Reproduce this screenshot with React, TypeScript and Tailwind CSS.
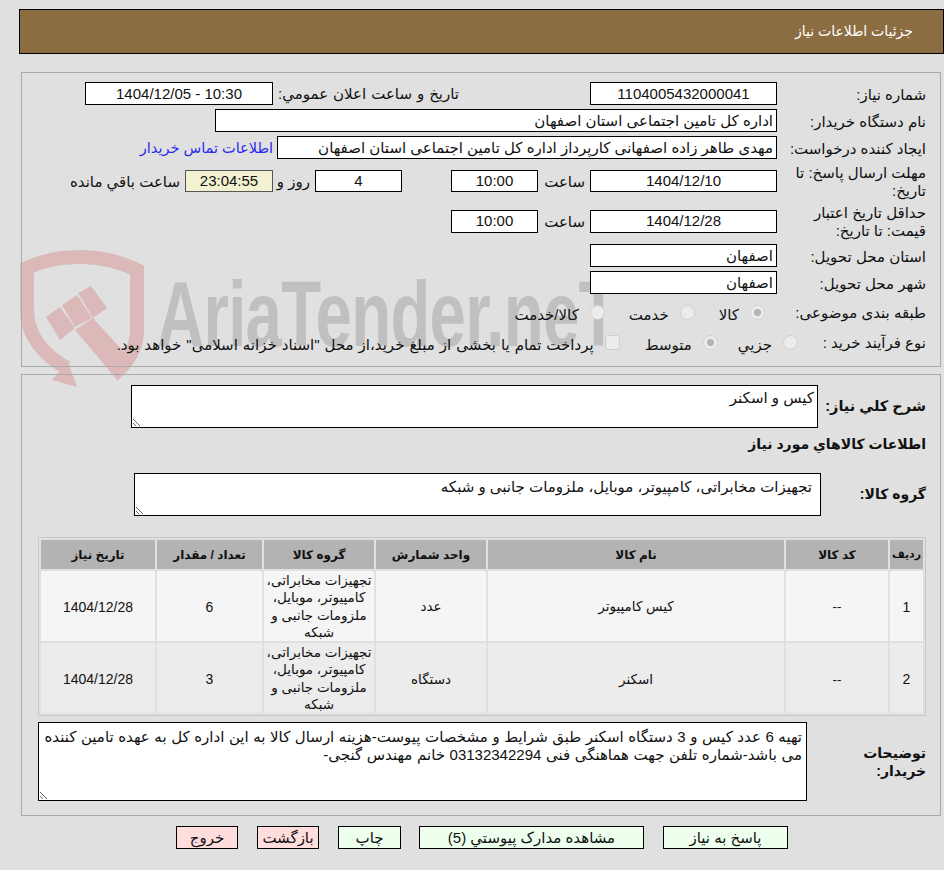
import React from "react";

const font = "font-['Liberation_Sans','DejaVu_Sans',sans-serif]";

function Box({ className = "", children }: { className?: string; children?: React.ReactNode }) {
  return (
    <div className={`flex items-center border border-black bg-white pt-[1px] text-[15px] text-[#111] ${className}`}>
      {children}
    </div>
  );
}

function Row({ label, className = "", children }: { label: React.ReactNode; className?: string; children: React.ReactNode }) {
  return (
    <div className={`flex items-center ${className}`}>
      <div className="relative top-[1px] w-[149px] shrink-0 text-[15px] leading-[18px]">{label}</div>
      {children}
    </div>
  );
}

const radioCls =
  "m-0 h-[15px] w-[15px] shrink-0 appearance-none rounded-full border border-[#cfcfcf] bg-[#ececec] checked:bg-[radial-gradient(circle,#b5b5b5_0,#b5b5b5_36%,#ececec_44%)]";

function Radio({ checked, label, className = "" }: { checked?: boolean; label: string; className?: string }) {
  return (
    <label className={`flex items-center gap-[11px] ${className}`}>
      <input type="radio" disabled defaultChecked={checked} className={radioCls} />
      <span className="relative top-[3px] whitespace-nowrap">{label}</span>
    </label>
  );
}

const groupText = "تجهیزات مخابراتی، کامپیوتر، موبایل، ملزومات جانبی و شبکه";

const items = [
  { id: 1, code: "--", name: "کیس کامپیوتر", unit: "عدد", count: 6, date: "1404/12/28", bg: "bg-[#f5f5f5]" },
  { id: 2, code: "--", name: "اسکنر", unit: "دستگاه", count: 3, date: "1404/12/28", bg: "bg-[#ececec]" },
];

function Watermark() {
  return (
    <div className="pointer-events-none absolute left-[15px] top-[240px] flex items-start" dir="ltr">
      <svg width="140" height="150" viewBox="0 0 140 150" fill="none" className="shrink-0">
        <path
          d="M52 128 C28 115 12 95 12 70 V28 C45 12 90 14 122 30 V90 C122 110 110 125 98 135"
          stroke="#dbb9b9"
          strokeWidth="14"
        />
        <path d="M37 140 L62 147 L53 122 Z" fill="#dbb9b9" />
        <path d="M31 77 L45 67 L60 88 L45 100 Z M47 65 L62 55 L77 78 L60 87 Z M63 53 L76 46 L92 68 L78 78 Z" fill="#dbb9b9" />
        <path d="M60 90 L78 78 L118 122 L98 135 Z" fill="#dbb9b9" />
      </svg>
      <span className="ml-[2px] mt-[24px] origin-left whitespace-nowrap text-[92px] font-bold leading-[100px] tracking-[-1px] text-[#c0c0c0] [transform:scaleX(0.71)]">
        AriaTender.neT
      </span>
    </div>
  );
}

export default function App() {
  return (
    <div dir="rtl" className={`relative h-[870px] w-[944px] overflow-hidden bg-[#e0e0e0] pt-[9px] text-[15px] text-[#111] ${font}`}>
      <Watermark />

      <header className="relative ml-[19px] flex h-[45px] items-center border border-black bg-[#8c6d42] pr-[30px] text-[14px] text-white">
        جزئیات اطلاعات نیاز
      </header>

      <section className="relative ml-[21px] mr-[3px] mt-[18px] h-[295px] border border-[#a9a9a9] pr-[14px] pt-[9px]">
        <Row label="شماره نیاز:" className="h-[23px]">
          <Box className="h-[23px] w-[187px] justify-center">1104005432000041</Box>
          <div className="relative top-[1px] mr-[131px] w-[181px] whitespace-nowrap [word-spacing:0.8px]">تاریخ و ساعت اعلان عمومي:</div>
          <Box className="mr-[5px] h-[23px] w-[188px] justify-center">10:30 - 1404/12/05</Box>
        </Row>
        <Row label="نام دستگاه خریدار:" className="mt-[4px] h-[23px]">
          <Box className="h-[23px] w-[562px] pr-[3px]">اداره کل تامین اجتماعی استان اصفهان</Box>
        </Row>
        <Row label="ایجاد کننده درخواست:" className="mt-[4px] h-[23px]">
          <Box className="h-[23px] w-[500px] whitespace-nowrap pr-[3px]">مهدی طاهر زاده اصفهانی کارپرداز اداره کل تامین اجتماعی استان اصفهان</Box>
          <span className="relative top-[1px] mr-[4px] whitespace-nowrap text-[14.5px] text-[#2a2aee]">اطلاعات تماس خریدار</span>
        </Row>
        <Row label="مهلت ارسال پاسخ: تا تاریخ:" className="mt-[4px] h-[36px]">
          <Box className="h-[22px] w-[187px] justify-center">1404/12/10</Box>
          <span className="relative top-[1px] mr-[5px] w-[47px]">ساعت</span>
          <Box className="h-[22px] w-[87px] justify-center">10:00</Box>
          <Box className="mr-[49px] h-[22px] w-[87px] justify-center">4</Box>
          <span className="relative top-[1px] mr-[5px] w-[37px]">روز و</span>
          <Box className="h-[22px] w-[88px] justify-center !border-[#555] !bg-[#f2f2d2]">23:04:55</Box>
          <span className="relative top-[1px] mr-[5px] whitespace-nowrap">ساعت باقي مانده</span>
        </Row>
        <Row label="حداقل تاریخ اعتبار قیمت: تا تاریخ:" className="mt-[4px] h-[36px]">
          <Box className="h-[23px] w-[187px] justify-center">1404/12/28</Box>
          <span className="relative top-[1px] mr-[5px] w-[47px]">ساعت</span>
          <Box className="h-[23px] w-[87px] justify-center">10:00</Box>
        </Row>
        <Row label="استان محل تحویل:" className="mt-[5px] h-[23px]">
          <Box className="h-[23px] w-[187px] pr-[3px]">اصفهان</Box>
        </Row>
        <Row label="شهر محل تحویل:" className="mt-[4px] h-[23px]">
          <Box className="h-[23px] w-[187px] pr-[3px]">اصفهان</Box>
        </Row>
        <Row label="طبقه بندی موضوعی:" className="mt-[6px] h-[24px]">
          <Radio checked label="کالا" className="mr-[12px]" />
          <Radio label="خدمت" className="mr-[24px]" />
          <Radio label="کالا/خدمت" className="mr-[24px]" />
        </Row>
        <Row label="نوع فرآیند خرید :" className="mt-[6px] h-[24px]">
          <Radio label="جزيي" className="mr-[-21px]" />
          <Radio checked label="متوسط" className="mr-[20px]" />
          <label className="mr-[25px] flex items-center gap-[11px]">
            <input type="checkbox" disabled className="m-0 h-[15px] w-[15px] shrink-0 appearance-none rounded-[3px] border border-[#cfcfcf] bg-[#ececec]" />
            <span className="relative top-[3px] whitespace-nowrap [word-spacing:0.8px]">پرداخت تمام یا بخشی از مبلغ خرید،از محل "اسناد خزانه اسلامی" خواهد بود.</span>
          </label>
        </Row>
      </section>

      <section className="relative ml-[21px] mr-[3px] mt-[7px] h-[442px] border border-[#a9a9a9] pr-[14px] pt-[10px]">
        <div className="flex h-[43px] items-center">
          <div className="w-[108px] whitespace-nowrap text-[14.5px] font-bold">شرح کلي نياز:</div>
          <textarea readOnly defaultValue="کیس و اسکنر" className="h-[43px] w-[687px] border border-black bg-white px-[3px] pt-[1px] text-[15px] text-[#111]" />
        </div>
        <div className="mt-[6px] text-[14px] font-bold leading-[20px]">اطلاعات کالاهاي مورد نياز</div>
        <div className="mt-[19px] flex h-[43px] items-center">
          <div className="w-[105px] whitespace-nowrap text-[14px] font-bold">گروه کالا:</div>
          <textarea readOnly defaultValue={groupText} className="h-[43px] w-[687px] border border-black bg-white px-[8px] pt-[2px] text-[15px] text-[#111]" />
        </div>

        <table className="mt-[21px] w-[888px] table-fixed border-separate border-spacing-[2px] border border-[#c8c8c8] text-center text-[13.5px]">
          <thead>
            <tr className="h-[29px] bg-[#b3b3b3] text-[12px] font-bold">
              <th className="w-[33px] whitespace-nowrap text-[11px] font-bold">رديف</th>
              <th className="w-[102px] font-bold">کد کالا</th>
              <th className="w-[296px] font-bold">نام کالا</th>
              <th className="w-[110px] font-bold">واحد شمارش</th>
              <th className="w-[110px] font-bold">گروه کالا</th>
              <th className="w-[105px] font-bold">تعداد / مقدار</th>
              <th className="font-bold">تاریخ نیاز</th>
            </tr>
          </thead>
          <tbody>
            {items.map((item) => (
              <tr key={item.id} className={item.bg}>
                <td className="pt-[3px] text-[14px]">{item.id}</td>
                <td className="pt-[3px]">{item.code}</td>
                <td className="pt-[3px]">{item.name}</td>
                <td className="pt-[3px]">{item.unit}</td>
                <td className="pt-[1px] leading-[17.3px]">{groupText}</td>
                <td className="pt-[3px] text-[14px]">{item.count}</td>
                <td className="pt-[3px] text-[14px]">{item.date}</td>
              </tr>
            ))}
          </tbody>
        </table>

        <div className="mt-[6px] flex h-[79px] items-center">
          <div className="w-[119px] text-[14px] font-bold leading-[18px]">
            <div className="w-[70px]">توضیحات خریدار:</div>
          </div>
          <textarea
            readOnly
            defaultValue="تهیه 6 عدد کیس و 3 دستگاه اسکنر طبق شرایط و مشخصات پیوست-هزینه ارسال کالا به این اداره کل به عهده تامین کننده می باشد-شماره تلفن جهت هماهنگی فنی 03132342294 خانم مهندس گنجی-"
            className="h-[79px] w-[769px] border border-black bg-white px-[4px] py-[5px] text-[15px] leading-[18px] text-[#111] [word-spacing:0.4px]"
          />
        </div>
      </section>

      <div className="mr-[156px] mt-[10px] flex h-[23px] gap-[19px] text-[15px]">
        <button className="w-[125px] border border-black bg-[#eeffee]">پاسخ به نیاز</button>
        <button className="w-[225px] border border-black bg-[#eeffee]">مشاهده مدارک پیوستي (5)</button>
        <button className="mr-[-1px] w-[63px] border border-black bg-[#eeffee]">چاپ</button>
        <button className="w-[62px] border border-black bg-[#ffdddd]">بازگشت</button>
        <button className="w-[62px] border border-black bg-[#ffdddd]">خروج</button>
      </div>
    </div>
  );
}
